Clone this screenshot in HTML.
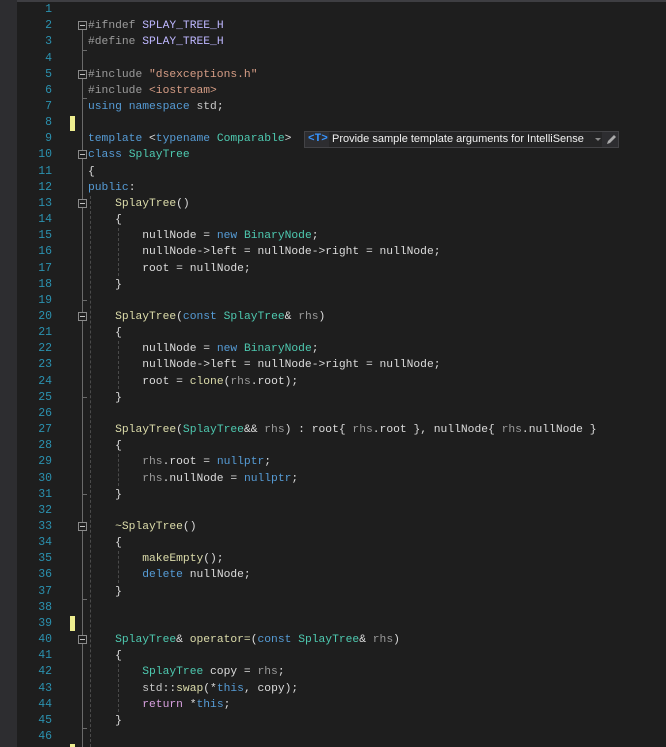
<!DOCTYPE html>
<html><head><meta charset="utf-8"><style>
html,body{margin:0;padding:0;width:666px;height:747px;overflow:hidden;background:#1e1e1e}
.top{position:absolute;left:0;top:0;width:666px;height:2px;background:#3e3e42}
.strip{position:absolute;left:0;top:0;width:17px;height:747px;background:#2d2d30}
.ln{position:absolute;left:17px;width:35px;text-align:right;color:#2b91af;font:11.5px "Liberation Mono",monospace;line-height:16px;white-space:pre}
.c{position:absolute;left:88px;color:#dcdcdc;font:11.3px "Liberation Mono",monospace;line-height:16px;white-space:pre}
.pp{color:#9b9b9b}.mac{color:#beb7ff}.str{color:#d69d85}.kw{color:#569cd6}.ty{color:#4ec9b0}
.fn{color:#dcdcaa}.pa{color:#9a9a9a}.ctl{color:#d8a0df}.ns{color:#c8c8c8}
.box{position:absolute;left:78px;width:7px;height:7px;border:1px solid #8a8a8a;background:#1e1e1e}
.box:after{content:"";position:absolute;left:1px;top:3px;width:5px;height:1px;background:#c0c0c0}
.ol{position:absolute;left:82px;width:1px;background:#6a6a6a}
.tk{position:absolute;left:82px;width:5px;height:1px;background:#6a6a6a}
.g{position:absolute;width:0;border-left:1px dashed #4a4a4a}
.ym{position:absolute;left:70px;width:5px;height:15px;background:#eeee90}
.tip{position:absolute;left:304px;top:131px;width:315px;height:17px;background:#2d2d30;border:1px solid #434346;box-sizing:border-box;font:11px "Liberation Sans",sans-serif;line-height:15px;color:#f1f1f1;white-space:pre}
</style></head><body>
<div class="top"></div><div class="strip"></div>

<div class="ol" style="top:26px;height:721px"></div>
<div class="tk" style="top:50px"></div>
<div class="tk" style="top:98px"></div>
<div class="tk" style="top:300px"></div>
<div class="tk" style="top:397px"></div>
<div class="tk" style="top:494px"></div>
<div class="tk" style="top:599px"></div>
<div class="tk" style="top:728px"></div>
<div class="box" style="top:21px"></div>
<div class="box" style="top:70px"></div>
<div class="box" style="top:150px"></div>
<div class="box" style="top:199px"></div>
<div class="box" style="top:312px"></div>
<div class="box" style="top:522px"></div>
<div class="box" style="top:635px"></div>

<div class="g" style="left:90px;top:196px;height:551px"></div>
<div class="g" style="left:118px;top:228px;height:48px"></div>
<div class="g" style="left:118px;top:341px;height:48px"></div>
<div class="g" style="left:118px;top:454px;height:32px"></div>
<div class="g" style="left:118px;top:551px;height:32px"></div>
<div class="g" style="left:118px;top:664px;height:48px"></div>

<div class="ym" style="top:116px"></div>
<div class="ym" style="top:616px"></div>
<div class="ym" style="top:744px;height:3px"></div>

<div class="ln" style="top:2px">1</div>
<div class="ln" style="top:18.2px">2</div>
<div class="ln" style="top:34.3px">3</div>
<div class="ln" style="top:50.5px">4</div>
<div class="ln" style="top:66.6px">5</div>
<div class="ln" style="top:82.8px">6</div>
<div class="ln" style="top:98.9px">7</div>
<div class="ln" style="top:115.1px">8</div>
<div class="ln" style="top:131.2px">9</div>
<div class="ln" style="top:147.4px">10</div>
<div class="ln" style="top:163.6px">11</div>
<div class="ln" style="top:179.7px">12</div>
<div class="ln" style="top:195.9px">13</div>
<div class="ln" style="top:212px">14</div>
<div class="ln" style="top:228.2px">15</div>
<div class="ln" style="top:244.3px">16</div>
<div class="ln" style="top:260.5px">17</div>
<div class="ln" style="top:276.6px">18</div>
<div class="ln" style="top:292.8px">19</div>
<div class="ln" style="top:309px">20</div>
<div class="ln" style="top:325.1px">21</div>
<div class="ln" style="top:341.3px">22</div>
<div class="ln" style="top:357.4px">23</div>
<div class="ln" style="top:373.6px">24</div>
<div class="ln" style="top:389.7px">25</div>
<div class="ln" style="top:405.9px">26</div>
<div class="ln" style="top:422px">27</div>
<div class="ln" style="top:438.2px">28</div>
<div class="ln" style="top:454.4px">29</div>
<div class="ln" style="top:470.5px">30</div>
<div class="ln" style="top:486.7px">31</div>
<div class="ln" style="top:502.8px">32</div>
<div class="ln" style="top:519px">33</div>
<div class="ln" style="top:535.1px">34</div>
<div class="ln" style="top:551.3px">35</div>
<div class="ln" style="top:567.4px">36</div>
<div class="ln" style="top:583.6px">37</div>
<div class="ln" style="top:599.8px">38</div>
<div class="ln" style="top:615.9px">39</div>
<div class="ln" style="top:632.1px">40</div>
<div class="ln" style="top:648.2px">41</div>
<div class="ln" style="top:664.4px">42</div>
<div class="ln" style="top:680.5px">43</div>
<div class="ln" style="top:696.7px">44</div>
<div class="ln" style="top:712.8px">45</div>
<div class="ln" style="top:729px">46</div>

<div class="c" style="top:18.2px"><span class="pp">#ifndef</span> <span class="mac">SPLAY_TREE_H</span></div>
<div class="c" style="top:34.3px"><span class="pp">#define</span> <span class="mac">SPLAY_TREE_H</span></div>
<div class="c" style="top:66.6px"><span class="pp">#include</span> <span class="str">"dsexceptions.h"</span></div>
<div class="c" style="top:82.8px"><span class="pp">#include</span> <span class="str">&lt;iostream&gt;</span></div>
<div class="c" style="top:98.9px"><span class="kw">using</span> <span class="kw">namespace</span> <span class="ns">std</span>;</div>
<div class="c" style="top:131.2px"><span class="kw">template</span> &lt;<span class="kw">typename</span> <span class="ty">Comparable</span>&gt;</div>
<div class="c" style="top:147.4px"><span class="kw">class</span> <span class="ty">SplayTree</span></div>
<div class="c" style="top:163.6px">{</div>
<div class="c" style="top:179.7px"><span class="kw">public</span>:</div>
<div class="c" style="top:195.9px">    <span class="fn">SplayTree</span>()</div>
<div class="c" style="top:212px">    {</div>
<div class="c" style="top:228.2px">        nullNode = <span class="kw">new</span> <span class="ty">BinaryNode</span>;</div>
<div class="c" style="top:244.3px">        nullNode-&gt;left = nullNode-&gt;right = nullNode;</div>
<div class="c" style="top:260.5px">        root = nullNode;</div>
<div class="c" style="top:276.6px">    }</div>
<div class="c" style="top:309px">    <span class="fn">SplayTree</span>(<span class="kw">const</span> <span class="ty">SplayTree</span>&amp; <span class="pa">rhs</span>)</div>
<div class="c" style="top:325.1px">    {</div>
<div class="c" style="top:341.3px">        nullNode = <span class="kw">new</span> <span class="ty">BinaryNode</span>;</div>
<div class="c" style="top:357.4px">        nullNode-&gt;left = nullNode-&gt;right = nullNode;</div>
<div class="c" style="top:373.6px">        root = <span class="fn">clone</span>(<span class="pa">rhs</span>.root);</div>
<div class="c" style="top:389.7px">    }</div>
<div class="c" style="top:422px">    <span class="fn">SplayTree</span>(<span class="ty">SplayTree</span>&amp;&amp; <span class="pa">rhs</span>) : root{ <span class="pa">rhs</span>.root }, nullNode{ <span class="pa">rhs</span>.nullNode }</div>
<div class="c" style="top:438.2px">    {</div>
<div class="c" style="top:454.4px">        <span class="pa">rhs</span>.root = <span class="kw">nullptr</span>;</div>
<div class="c" style="top:470.5px">        <span class="pa">rhs</span>.nullNode = <span class="kw">nullptr</span>;</div>
<div class="c" style="top:486.7px">    }</div>
<div class="c" style="top:519px">    <span class="fn">~SplayTree</span>()</div>
<div class="c" style="top:535.1px">    {</div>
<div class="c" style="top:551.3px">        <span class="fn">makeEmpty</span>();</div>
<div class="c" style="top:567.4px">        <span class="kw">delete</span> nullNode;</div>
<div class="c" style="top:583.6px">    }</div>
<div class="c" style="top:632.1px">    <span class="ty">SplayTree</span>&amp; <span class="fn">operator=</span>(<span class="kw">const</span> <span class="ty">SplayTree</span>&amp; <span class="pa">rhs</span>)</div>
<div class="c" style="top:648.2px">    {</div>
<div class="c" style="top:664.4px">        <span class="ty">SplayTree</span> copy = <span class="pa">rhs</span>;</div>
<div class="c" style="top:680.5px">        <span class="ns">std</span>::<span class="fn">swap</span>(*<span class="kw">this</span>, copy);</div>
<div class="c" style="top:696.7px">        <span class="ctl">return</span> *<span class="kw">this</span>;</div>
<div class="c" style="top:712.8px">    }</div>

<div class="tip"><span style="position:absolute;left:3px;top:0;color:#3794ff;font-family:'Liberation Mono',monospace;font-size:11px;font-weight:bold">&lt;T&gt;</span><span style="position:absolute;left:24px;top:0;width:273px;height:15px;background:#252526"></span><span style="position:absolute;left:27px;top:0">Provide sample template arguments for IntelliSense</span><span style="position:absolute;left:290px;top:6px;width:0;height:0;border-left:3px solid transparent;border-right:3px solid transparent;border-top:3px solid #888"></span><svg style="position:absolute;left:300px;top:1px" width="12" height="13" viewBox="0 0 12 13"><path d="M2 11 L3 8 L9 2 L11 4 L5 10 Z" fill="#aaa"/></svg></div>
</body></html>
